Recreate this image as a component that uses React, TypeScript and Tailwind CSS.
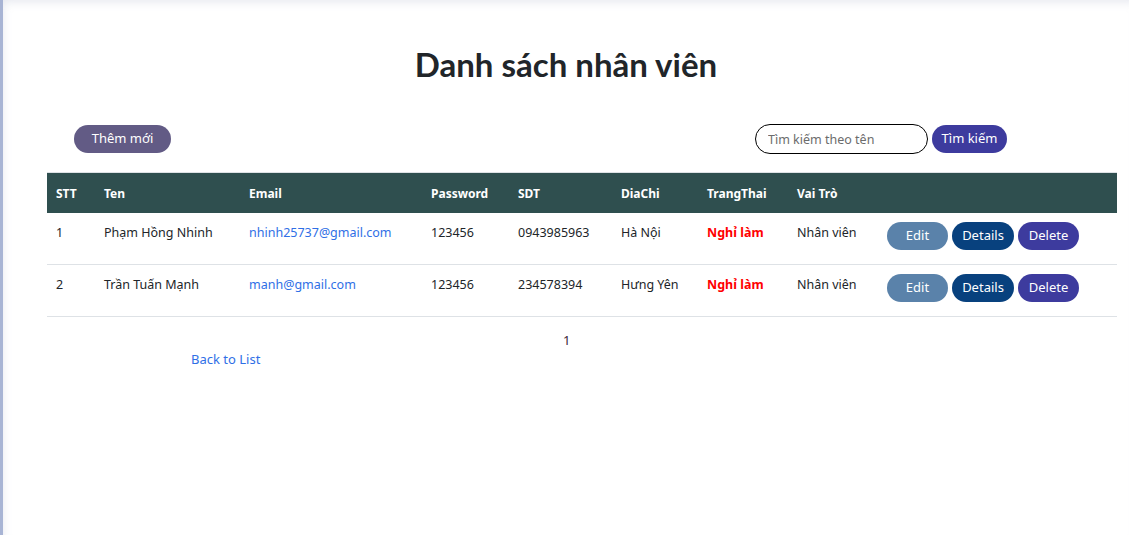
const employees = [
  {
    stt: 1,
    ten: "Phạm Hồng Nhinh",
    email: "nhinh25737@gmail.com",
    password: "123456",
    sdt: "0943985963",
    diaChi: "Hà Nội",
    trangThai: "Nghỉ làm",
    vaiTro: "Nhân viên",
  },
  {
    stt: 2,
    ten: "Trần Tuấn Mạnh",
    email: "manh@gmail.com",
    password: "123456",
    sdt: "234578394",
    diaChi: "Hưng Yên",
    trangThai: "Nghỉ làm",
    vaiTro: "Nhân viên",
  },
];

const columns = [
  { label: "STT", w: "w-[48px]" },
  { label: "Ten", w: "w-[145px]" },
  { label: "Email", w: "w-[182px]" },
  { label: "Password", w: "w-[87px]" },
  { label: "SDT", w: "w-[103px]" },
  { label: "DiaChi", w: "w-[86px]" },
  { label: "TrangThai", w: "w-[90px]" },
  { label: "Vai Trò", w: "w-[90px]" },
  { label: "", w: "" },
];

export default function App() {
  return (
    <div className="flex min-h-[535px] w-full bg-white font-['Noto_Sans',sans-serif] text-[#212529]">
      <div className="w-[3px] shrink-0 bg-[#a8b4d4]" />
      <main className="flex-1 pt-[45px] pb-10 shadow-[inset_4px_6px_10px_-4px_rgba(200,205,220,0.45)]">
        <h1 className="text-center font-['Lato',sans-serif] text-[33px] font-bold leading-[38px] text-[#212529]">
          Danh sách nhân viên
        </h1>

        <div className="mt-[41px] ml-[71px] mr-[122px] flex items-center justify-between">
          <button className="h-[28px] w-[97px] rounded-full bg-[#625b85] text-[13px] text-white">
            Thêm mới
          </button>
          <div className="flex items-center gap-[4px]">
            <input
              placeholder="Tìm kiếm theo tên"
              className="h-[30px] w-[173px] rounded-full border border-black px-3 text-[12.5px] placeholder:text-[#6c6c6c] outline-none"
            />
            <button className="h-[28px] w-[75px] rounded-full bg-[#3d3b9e] text-[13px] text-white">
              Tìm kiếm
            </button>
          </div>
        </div>

        <div className="mt-[18px] ml-[44px] mr-[12px]">
          <table className="w-full border-collapse text-[12.5px]">
            <thead>
              <tr className="border-t border-[#dee2e6] bg-[#2f4f4f] text-white">
                {columns.map((c, i) => (
                  <th
                    key={i}
                    className={`${c.w} h-[40px] px-[9px] pt-[2px] text-left text-[12px] font-bold`}
                  >
                    {c.label}
                  </th>
                ))}
              </tr>
            </thead>
            <tbody>
              {employees.map((e) => (
                <tr key={e.stt} className="h-[52px] border-b border-[#dee2e6] align-top">
                  <td className="px-[9px] pt-[10px] leading-5">{e.stt}</td>
                  <td className="px-[9px] pt-[10px] leading-5">{e.ten}</td>
                  <td className="px-[9px] pt-[10px] leading-5">
                    <a className="text-[#2f6fe6]">{e.email}</a>
                  </td>
                  <td className="px-[9px] pt-[10px] leading-5">{e.password}</td>
                  <td className="px-[9px] pt-[10px] leading-5">{e.sdt}</td>
                  <td className="px-[9px] pt-[10px] leading-5">{e.diaChi}</td>
                  <td className="px-[9px] pt-[10px] leading-5 font-bold text-[#ff0000]">
                    {e.trangThai}
                  </td>
                  <td className="px-[9px] pt-[10px] leading-5">{e.vaiTro}</td>
                  <td className="px-[9px] pt-[9px]">
                    <div className="flex gap-[4px]">
                      <button className="h-[28px] w-[61px] rounded-full bg-[#5a82aa] text-[13px] text-white">
                        Edit
                      </button>
                      <button className="h-[28px] w-[62px] rounded-full bg-[#08417e] text-[13px] text-white">
                        Details
                      </button>
                      <button className="h-[28px] w-[61px] rounded-full bg-[#3d3b9e] text-[13px] text-white">
                        Delete
                      </button>
                    </div>
                  </td>
                </tr>
              ))}
            </tbody>
          </table>

          <div className="mt-[13px] pl-[516px] text-[13px] leading-5 text-[#3b2538]">1</div>
          <div className="ml-[144px] -mt-px text-[13px] leading-5 text-[#2f6fe6]">Back to List</div>
        </div>
      </main>
    </div>
  );
}
